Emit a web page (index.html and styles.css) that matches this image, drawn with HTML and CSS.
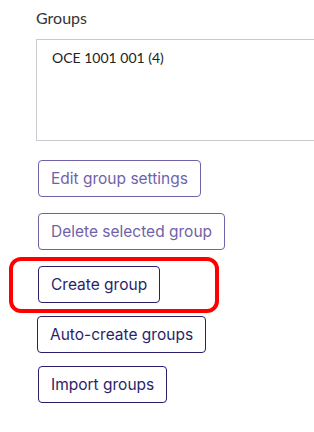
FILE: index.html
```html
<!DOCTYPE html>
<html lang="en">
<head>
    <meta charset="UTF-8">
    <meta name="viewport" content="width=device-width, initial-scale=1.0">
    <title>Groups</title>
    <link rel="stylesheet" href="styles.css">
</head>
<body>
    <div class="groups-panel">
        <label class="groups-label" for="groups">Groups</label>
        <div class="groups-list" id="groups">
            <div class="groups-option">OCE 1001 001 (4)</div>
        </div>
        <div class="btn-list">
            <button class="group-btn" disabled>Edit group settings</button>
            <button class="group-btn" disabled>Delete selected group</button>
            <button class="group-btn tight">Create group</button>
            <button class="group-btn tight nudge">Auto-create groups</button>
            <button class="group-btn">Import groups</button>
        </div>
    </div>
    <!-- highlight drawn over the create button -->
    <div class="highlight"></div>
</body>
</html>
```

FILE: styles.css
```css
body {
    margin: 0;
    background-color: #fff;
    font-family: Lato, "Open Sans", sans-serif;
    overflow: hidden;
    position: relative;
    height: 432px;
}
.groups-panel {
    padding: 8px 0 0 36px;
}
.groups-label {
    display: block;
    font-size: 16px;
    color: #333;
    line-height: 20px;
    margin-bottom: 11px;
}
.groups-list {
    width: 277px;
    height: 100px;
    border: 1px solid #c9c9cf;
    border-right: none;
}
.groups-option {
    font-size: 14px;
    color: #222;
    padding: 9px 0 0 15px;
}
.btn-list {
    display: flex;
    flex-direction: column;
    align-items: flex-start;
    padding: 19px 0 0 2px;
}
.group-btn {
    font-family: Inter, sans-serif;
    font-size: 15.5px;
    color: #2b1e6b;
    background: #fff;
    border: 1px solid #2b1e6b;
    border-radius: 4px;
    height: 37px;
    padding: 0 12px;
    margin-bottom: 16px;
}
.group-btn:disabled {
    color: #6f62a8;
    border-color: #6f62a8;
}
.group-btn.tight {
    margin-bottom: 13px;
}
.group-btn.nudge {
    margin-left: -1px;
}
.highlight {
    position: absolute;
    left: 9px;
    top: 257px;
    width: 202px;
    height: 48px;
    border: 4px solid #f00;
    border-radius: 12px;
}
```
